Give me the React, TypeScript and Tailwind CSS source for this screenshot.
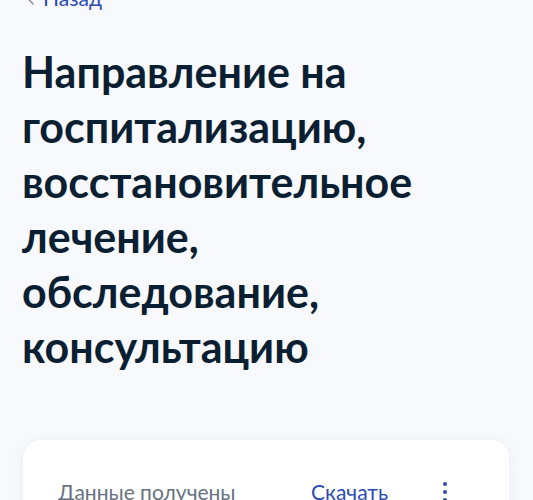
import React from 'react';

const App: React.FC = () => {
  return (
    <div className="h-[500px] overflow-hidden bg-[#f8f9fc] px-6 font-['Lato',sans-serif] text-[#0b1f33]">
      <div className="-mt-[14px] flex items-center gap-[8px] pl-[3px] text-[21px] leading-[24px] text-[#2c4bb4]">
        <svg width="8" height="12" viewBox="0 0 8 12" fill="none" className="mt-[2px]">
          <path d="M6 1L1.5 6L6 11" stroke="#8a96a3" strokeWidth="1.6" strokeLinecap="round" strokeLinejoin="round" />
        </svg>
        <span>Назад</span>
      </div>

      <h1 className="mt-[34px] -ml-[2px] max-w-[440px] text-[43px] font-bold leading-[55px] text-[#0b1f33]">
        Направление на госпитализацию, восстановительное лечение, обследование, консультацию
      </h1>

      <div className="mt-[66px] -ml-[1px] rounded-[18px] bg-white pl-[35px] pr-[62px] pt-[38px] pb-6 shadow-[0_2px_14px_rgba(90,110,170,0.09)]">
        <div className="flex items-center">
          <span className="flex-1 text-[21px] leading-[28px] text-[#66727f]">Данные получены</span>
          <span className="text-[21px] leading-[28px] text-[#2c4bb4]">Скачать</span>
          <span className="ml-[55px] flex flex-col gap-[4px]">
            <span className="h-[4px] w-[4px] rounded-full bg-[#2c4bb4]" />
            <span className="h-[4px] w-[4px] rounded-full bg-[#2c4bb4]" />
            <span className="h-[4px] w-[4px] rounded-full bg-[#2c4bb4]" />
          </span>
        </div>
      </div>
    </div>
  );
};

export default App;
